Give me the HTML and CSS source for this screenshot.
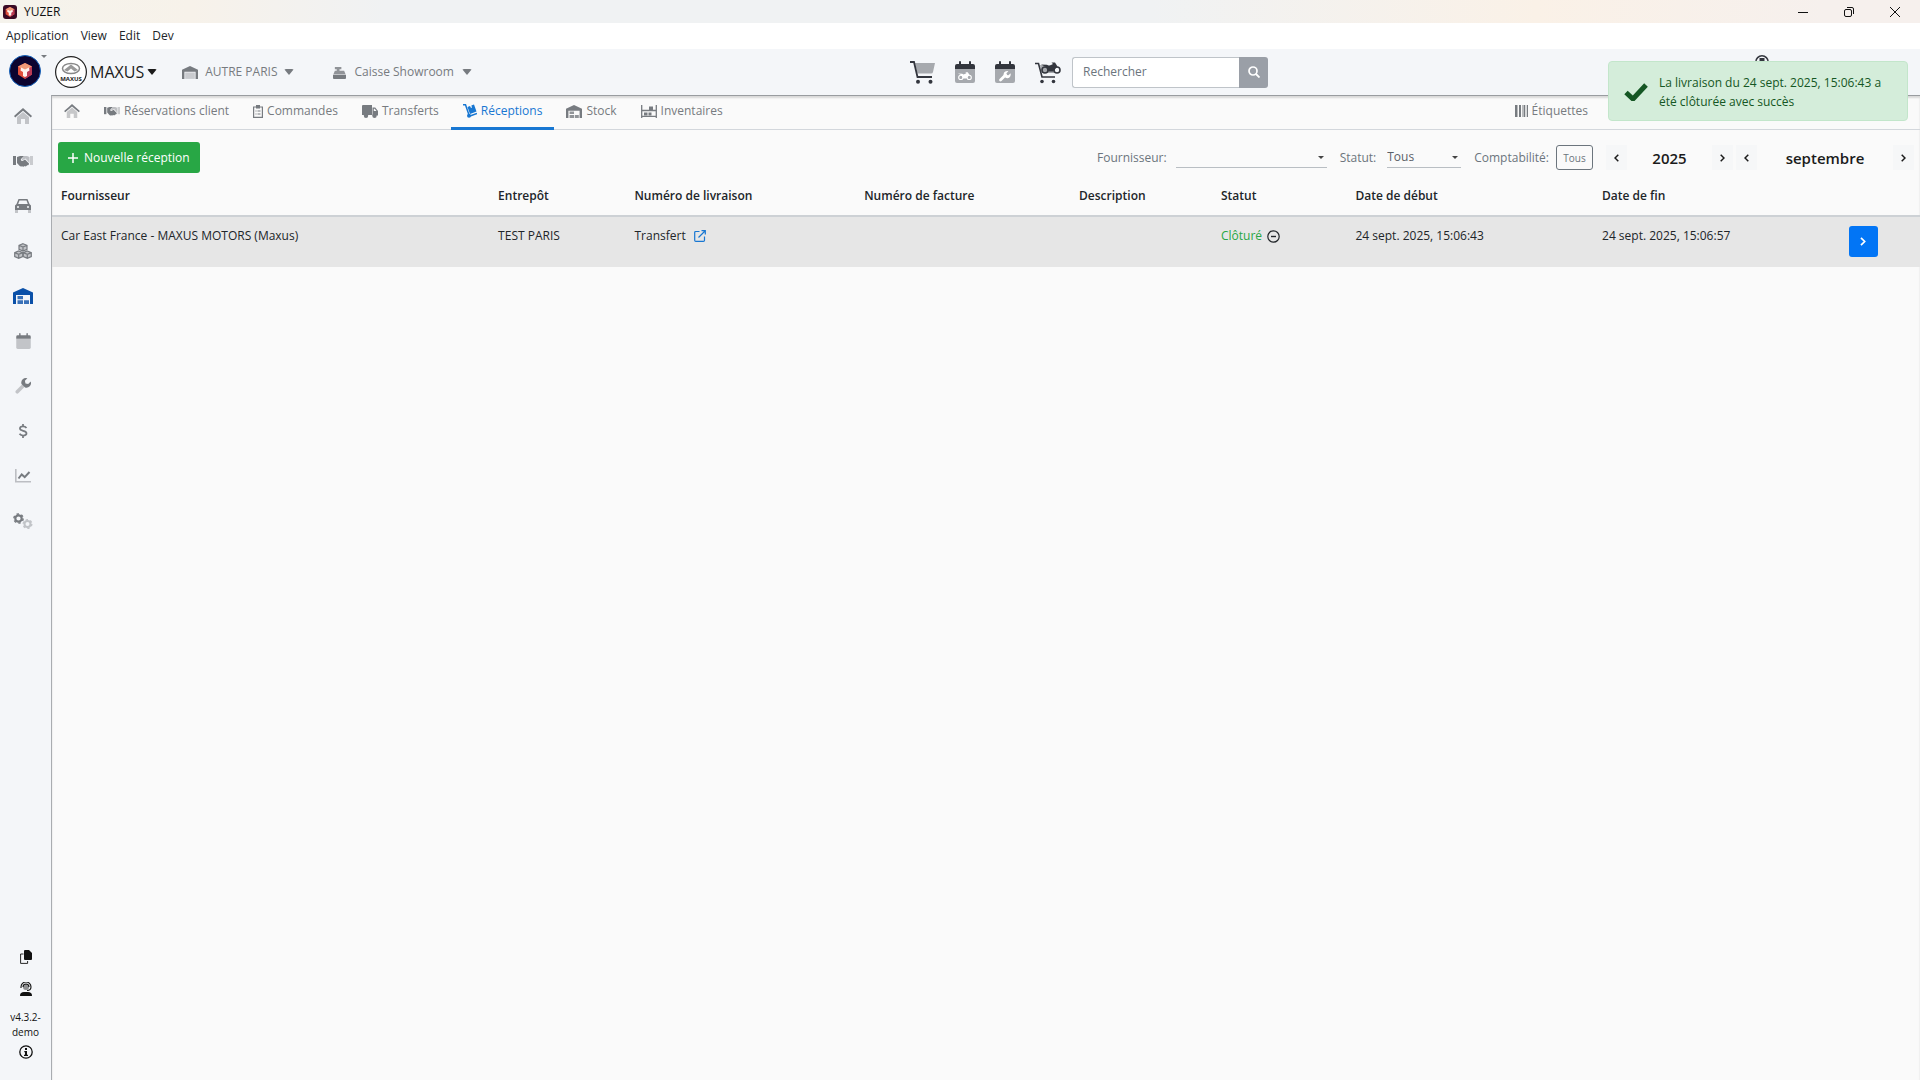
FILE: index.html
```html
<!DOCTYPE html>
<html lang="fr">
<head>
<meta charset="utf-8">
<title>YUZER</title>
<link rel="stylesheet" href="styles.css">
</head>
<body>
<svg class="sprite" aria-hidden="true">
  <symbol id="home" viewBox="0 0 18 16"><path d="M3 9l6-5 6 5v7h-4v-5H7v5H3z" opacity=".4"/><path d="M9 0l9 8-1.200 1.500L9 2.800 1.200 9.500 0 8l5-4.400z"/></symbol>
  <symbol id="shake" viewBox="0 0 20 12"><path d="M0 1h3v9H0z"/><path d="M17 1h3v9h-3z" opacity=".35"/><path d="M4 2l3-1h4L8 4c-.6 1.500 1 2.600 2.400 1.500L12 4.500l4 4c0 1.500-1 2-2 1.800-.3 1-1.500 1.400-2.300.8-.8.800-2 .7-2.700.2-1 .5-2 .1-2.500-.6L4 8z"/><path d="M11 1h3l2.500 1v6L12.500 3.500 10 5c-1 .4-1.500-.4-1-1z" opacity=".45"/></symbol>
  <symbol id="car" viewBox="0 0 16 14"><path d="M3.500 0h9l2 5L16 6.500V11H0V6.500L1.500 5zm1 1.600L3.200 5h9.600l-1.300-3.400zM3 7a1 1 0 100 2 1 1 0 000-2zm10 0a1 1 0 100 2 1 1 0 000-2z" fill-rule="evenodd"/><path d="M0 11h3v3H0zm13 0h3v3h-3z" opacity=".4"/></symbol>
  <symbol id="boxes" viewBox="0 0 18 16"><path d="M9 .7l4 1.600v4L9 8 5 6.300v-4zM4.700 8l4 1.600v4l-4 1.700-4-1.700v-4zM13.300 8l4 1.600v4l-4 1.700-4-1.700v-4z" opacity=".4"/><path d="M9 .7l4 1.600v4L9 8 5 6.300v-4zM5 2.300L9 4l4-1.700M9 4v4M4.700 8l4 1.600v4l-4 1.700-4-1.700v-4zM.7 9.600l4 1.700 4-1.700M4.700 11.300v4M13.300 8l4 1.600v4l-4 1.700-4-1.700v-4zM9.300 9.600l4 1.700 4-1.700M13.300 11.300v4" fill="none" stroke="currentColor" stroke-width="1.200"/></symbol>
  <symbol id="depot" viewBox="0 0 20 16"><path d="M0 16V4.500L10 0l10 4.500V16h-3V7H3v9z"/><path d="M4.500 8H10v3.200H4.500zM4.500 12.300H10V16H4.500zM11 12.300h5V16h-5z" opacity=".8"/></symbol>
  <symbol id="depotlight" viewBox="0 0 20 16"><path d="M0 16V4.500L10 0l10 4.500V16h-3V7H3v9z"/><path d="M4 8h12v8H4z" opacity=".35"/></symbol>
  <symbol id="cal" viewBox="0 0 20 22"><path d="M0 8h20v12q0 2-2 2H2q-2 0-2-2z" opacity=".4"/><path d="M0 8V5q0-2 2-2h2V1q0-1 1-1t1 1v2h8V1q0-1 1-1t1 1v2h2q2 0 2 2v3z"/></symbol>
  <symbol id="wrench" viewBox="0 0 16 16"><path d="M7.500 6L1 12.500a1.700 1.700 0 002.500 2.500L10 8.500z" opacity=".4"/><path d="M15.700 3.600l-2.500 2.500-2.700-.6-.6-2.700L12.400.3A4.600 4.600 0 006.500 6l3.600 3.600a4.600 4.600 0 005.600-6z"/></symbol>
  <symbol id="dollar" viewBox="0 0 10 16"><path d="M9 4.600C8 3.200 6.500 2.800 5 2.800c-2 0-3.500.9-3.500 2.400C1.500 8.700 9 7 9 10.600c0 1.700-1.700 2.600-3.800 2.600C3.500 13.200 2 12.600 1 11.200M5 0v3M5 13v3" fill="none" stroke="currentColor" stroke-width="2"/></symbol>
  <symbol id="chart" viewBox="0 0 16 14"><path d="M.8 0v12.800H16" fill="none" stroke="currentColor" stroke-width="1.600" opacity=".45"/><path d="M3.500 9.500l3.200-4 3 2.600L14.500 3" fill="none" stroke="currentColor" stroke-width="2"/></symbol>
  <symbol id="gears" viewBox="0 0 20 16"><circle cx="5.500" cy="5.500" r="3.200" fill="none" stroke="currentColor" stroke-width="2.200"/><circle cx="5.500" cy="5.500" r="4.600" fill="none" stroke="currentColor" stroke-width="1.500" stroke-dasharray="2.400 2.400"/><g opacity=".4"><circle cx="14.500" cy="11" r="3" fill="none" stroke="currentColor" stroke-width="2"/><circle cx="14.500" cy="11" r="4.300" fill="none" stroke="currentColor" stroke-width="1.400" stroke-dasharray="2.250 2.250"/></g></symbol>
  <symbol id="copy" viewBox="0 0 12 14"><path d="M3.500 4H.6v9.400h7V11" fill="none" stroke="currentColor" stroke-width=".9"/><path d="M5 0h4l3 3v6q0 1-1 1H5q-1 0-1-1V1q0-1 1-1z"/></symbol>
  <symbol id="agent" viewBox="0 0 12 14"><circle cx="6" cy="5" r="3" opacity=".45"/><path d="M1 6V5a5 5 0 0110 0c0 2-1.500 3.500-4 3.500M3 5a3 3 0 016 0" fill="none" stroke="currentColor" stroke-width="1.100"/><path d="M0 14c0-3 1.500-4 4-4h4c2.500 0 4 1 4 4z"/></symbol>
  <symbol id="info" viewBox="0 0 14 14"><circle cx="7" cy="7" r="6.200" fill="none" stroke="currentColor" stroke-width="1.300"/><path d="M6 3h2v2H6zM5.300 6H8v3.700h1V11H5V9.700h1V7.200h-.7z"/></symbol>
  <symbol id="register" viewBox="0 0 14 14"><path d="M2 1h7v2.500H7V5h5l1.500 4H.5L2 5h2V3.500H2z" opacity=".8"/><path d="M0 9.500h14V13q0 1-1 1H1q-1 0-1-1z"/></symbol>
  <symbol id="clip" viewBox="0 0 10 13"><path d="M.6 2h8.800v10.400H.6z" fill="none" stroke="currentColor" stroke-width="1.200"/><path d="M3 0h4v3.500H3zM2.500 5.500h1v1h-1zM4.500 5.500h3v1h-3zM2.500 8.500h1v1h-1zM4.500 8.500h3v1h-3z"/></symbol>
  <symbol id="truck" viewBox="0 0 16 13"><path d="M1 0h9v10H0V1q0-1 1-1z"/><path d="M10.500 2.500h2.700L16 6v4.500h-5.500zm1.300 1.200V6h2.700l-1.800-2.300z" fill-rule="evenodd"/><circle cx="4" cy="10.700" r="2.200"/><circle cx="12.500" cy="10.700" r="2.200"/></symbol>
  <symbol id="dolly" viewBox="0 0 14 14"><path d="M0 .8h2.500L6 11M7 12l7-2.500" fill="none" stroke="currentColor" stroke-width="1.500"/><circle cx="6" cy="11.800" r="2"/><path d="M4.500 3L7 2l1 2 1-.4-.7-2L11 .6l2.500 7L7 10z"/></symbol>
  <symbol id="shelf" viewBox="0 0 16 13"><path d="M.7 0v13M15.300 0v13M.7 5.500h14.600M.7 11.300h14.600" fill="none" stroke="currentColor" stroke-width="1.300"/><path d="M8 1.500h4V5H8zM3 7.500h3.500v3H3zM7.500 7.500h3v3h-3z"/></symbol>
  <symbol id="bars" viewBox="0 0 13 12"><path d="M0 0h2v12H0zM4 0h2v12H4zM9 0h1v12H9zM12 0h1v12h-1z"/><path d="M2 0h1v12H2zM7 0h2v12H7zM10.500 0h1v12h-1z" opacity=".5"/></symbol>
  <symbol id="cart" viewBox="0 0 25 23"><path d="M5 2h20l-2 9q-.3 1.500-2 1.500H7.500z" opacity=".4"/><path d="M0 1h4l3.500 15H22" fill="none" stroke="currentColor" stroke-width="1.800"/><circle cx="8" cy="20.800" r="2"/><circle cx="20.500" cy="20.800" r="2"/></symbol>
  <symbol id="moto" viewBox="0 0 20 12"><circle cx="4" cy="8" r="3" fill="none" stroke="currentColor" stroke-width="1.600"/><circle cx="16" cy="8" r="3" fill="none" stroke="currentColor" stroke-width="1.600"/><path d="M0 2.500l6 .2L8 4l4-2-1.500-1.500H14l2.500 4-2 2-2.500 3H7.500L5 5z"/></symbol>
  <symbol id="motocart" viewBox="0 0 26 23"><path d="M5 4h16l-2 8H7z" opacity=".4"/><path d="M0 2.500h3.500L7 16h13" fill="none" stroke="currentColor" stroke-width="1.600"/><circle cx="7" cy="20.500" r="1.800"/><circle cx="18.500" cy="20.500" r="1.800"/><use href="#moto" x="6" y="1" width="20" height="12"/></symbol>
  <symbol id="calmoto" viewBox="0 0 20 22"><use href="#cal"/><g color="#fff" fill="#fff"><use href="#moto" x="3" y="10.500" width="14" height="9"/></g></symbol>
  <symbol id="calwrench" viewBox="0 0 20 22"><use href="#cal"/><path d="M5.500 19l5-5" stroke="#fff" stroke-width="2.800" stroke-linecap="round"/><path d="M15.500 12.300l-2 2-1.700-.4-.4-1.700 2-2a3.600 3.600 0 102.100 2.100z" fill="#fff"/></symbol>
  <symbol id="search" viewBox="0 0 12 12"><circle cx="5" cy="5" r="4" fill="none" stroke="currentColor" stroke-width="1.700"/><path d="M8 8l3.500 3.500" stroke="currentColor" stroke-width="1.800"/></symbol>
  <symbol id="plus" viewBox="0 0 10 10"><path d="M5 0v10M0 5h10" stroke="currentColor" stroke-width="1.500"/></symbol>
  <symbol id="left" viewBox="0 0 5 8"><path d="M4.300.7L1 4l3.300 3.300" fill="none" stroke="currentColor" stroke-width="1.500"/></symbol>
  <symbol id="right" viewBox="0 0 5 8"><path d="M.7.700L4 4 .7 7.300" fill="none" stroke="currentColor" stroke-width="1.500"/></symbol>
  <symbol id="external" viewBox="0 0 12 12"><path d="M5.500 1.500H1.800q-1.100 0-1.100 1.100v7.600q0 1.100 1.100 1.100h7.600q1.100 0 1.100-1.100V6.500M4.500 7.500L11 1M7.500.7h3.800v3.800" fill="none" stroke="currentColor" stroke-width="1.200"/></symbol>
  <symbol id="minus" viewBox="0 0 13 13"><circle cx="6.500" cy="6.500" r="5.700" fill="none" stroke="currentColor" stroke-width="1.200"/><path d="M4 6.500h5" stroke="currentColor" stroke-width="1.400"/></symbol>
  <symbol id="check" viewBox="0 0 24 18"><path d="M2 9.500l7 6.500L22 2" fill="none" stroke="currentColor" stroke-width="5"/></symbol>
  <symbol id="user" viewBox="0 0 14 14"><circle cx="7" cy="7" r="6.200" fill="none" stroke="currentColor" stroke-width="1.500"/><path d="M4.500 3h5v4h-5z"/></symbol>
  <symbol id="gem" viewBox="0 0 16 16"><path d="M8 0l7 3.500v8L8 16l-7-4.500v-8z" fill="#e0503c"/><path d="M8 0l7 3.500L8 8 1 3.500z" fill="#f09a78"/><path d="M8 8l7-4.500v8L8 16z" fill="#b93a55"/><path d="M4 4.500L8 6.500l4-2 .5 3L10 9v4l-2 1-2-1V9L3.500 7.500z" fill="#fff4ef"/></symbol>
</svg>

<header class="titlebar">
  <span class="appicon"><svg width="10" height="10"><use href="#gem"/></svg></span>
  <span>YUZER</span>
  <div class="winbtns">
    <button aria-label="Réduire"><svg width="10" height="10" viewBox="0 0 10 10"><path d="M0 5.500h10" stroke="#111"/></svg></button>
    <button aria-label="Restaurer"><svg width="10" height="10" viewBox="0 0 10 10"><path d="M3 .5h5q1.500 0 1.500 1.500v5M.5 4q0-1.500 1.500-1.500h4q1.500 0 1.500 1.500v4q0 1.500-1.500 1.500H2Q.5 9.500.5 8z" fill="none" stroke="#111"/></svg></button>
    <button aria-label="Fermer"><svg width="10" height="10" viewBox="0 0 10 10"><path d="M0 0l10 10M10 0L0 10" stroke="#111"/></svg></button>
  </div>
</header>
<nav class="menubar" aria-label="Menu">
  <button>Application</button><button>View</button><button>Edit</button><button>Dev</button>
</nav>

<div class="app">
  <aside class="side">
    <button class="brand" aria-label="YUZER"><span class="disc"><svg width="16" height="16"><use href="#gem"/></svg></span><i class="caret tiny"></i></button>
    <div class="rail">
      <nav class="modules" aria-label="Modules">
        <a href="#" aria-label="Accueil"><svg width="18" height="16"><use href="#home"/></svg></a>
        <a href="#" aria-label="Clients"><svg width="20" height="12"><use href="#shake"/></svg></a>
        <a href="#" aria-label="Véhicules"><svg width="16" height="14"><use href="#car"/></svg></a>
        <a href="#" aria-label="Articles"><svg width="18" height="16"><use href="#boxes"/></svg></a>
        <a href="#" aria-label="Entrepôt" class="on"><svg width="20" height="16"><use href="#depot"/></svg></a>
        <a href="#" aria-label="Agenda"><svg width="15" height="16"><use href="#cal"/></svg></a>
        <a href="#" aria-label="Atelier"><svg width="16" height="16"><use href="#wrench"/></svg></a>
        <a href="#" aria-label="Finance"><svg width="10" height="14"><use href="#dollar"/></svg></a>
        <a href="#" aria-label="Statistiques"><svg width="16" height="14"><use href="#chart"/></svg></a>
        <a href="#" aria-label="Paramètres"><svg width="20" height="16"><use href="#gears"/></svg></a>
      </nav>
      <div class="about">
        <button aria-label="Copier"><svg width="12" height="14"><use href="#copy"/></svg></button>
        <button aria-label="Assistance"><svg width="12" height="14"><use href="#agent"/></svg></button>
        <span class="version">v4.3.2-<br>demo</span>
        <button aria-label="Informations"><svg width="14" height="14"><use href="#info"/></svg></button>
      </div>
    </div>
  </aside>

  <div class="main">
    <header class="top">
      <div class="context">
        <button class="company">
          <svg width="32" height="32" viewBox="0 0 32 32"><circle cx="16" cy="16" r="15.400" fill="#fff" stroke="#222" stroke-width="1.200"/><ellipse cx="16" cy="12.500" rx="8.500" ry="5" fill="none" stroke="#888" stroke-width="1.500"/><path d="M9 14l7-5.500 7 5.500-3.500 1.500L16 12.500l-3.500 3z" fill="#999"/><text x="16" y="25" text-anchor="middle" font-size="6" font-weight="700" fill="#222">MAXUS</text></svg>
          <span>MAXUS</span><i class="caret"></i></button>
        <button class="site"><svg width="16" height="13"><use href="#depotlight"/></svg><span>AUTRE PARIS</span><i class="caret"></i></button>
        <button class="till"><svg width="13" height="13"><use href="#register"/></svg><span>Caisse Showroom</span><i class="caret"></i></button>
      </div>
      <div class="tools">
        <button aria-label="Panier"><svg width="25" height="23"><use href="#cart"/></svg></button>
        <button aria-label="Essais"><svg width="20" height="22"><use href="#calmoto"/></svg></button>
        <button aria-label="Rendez-vous atelier"><svg width="20" height="22"><use href="#calwrench"/></svg></button>
        <button aria-label="Vente moto"><svg width="26" height="23"><use href="#motocart"/></svg></button>
      </div>
      <form class="search" role="search">
        <input type="search" placeholder="Rechercher" aria-label="Rechercher">
        <button type="button" aria-label="Lancer la recherche"><svg width="12" height="12"><use href="#search"/></svg></button>
      </form>
      <button class="account" aria-label="Compte"><svg width="14" height="14"><use href="#user"/></svg></button>
    </header>

    <div class="page">
      <nav class="tabs" aria-label="Entrepôt">
        <a href="#" aria-label="Accueil entrepôt"><svg width="16" height="14"><use href="#home"/></svg></a>
        <a href="#"><svg width="16" height="10"><use href="#shake"/></svg>Réservations client</a>
        <a href="#"><svg width="10" height="13"><use href="#clip"/></svg>Commandes</a>
        <a href="#"><svg width="16" height="13"><use href="#truck"/></svg>Transferts</a>
        <a href="#" class="on" aria-current="page"><svg width="14" height="14"><use href="#dolly"/></svg>Réceptions</a>
        <a href="#"><svg width="16" height="13"><use href="#depot"/></svg>Stock</a>
        <a href="#"><svg width="16" height="13"><use href="#shelf"/></svg>Inventaires</a>
        <a href="#" class="labels"><svg width="13" height="12"><use href="#bars"/></svg>Étiquettes</a>
      </nav>

      <div class="toolbar">
        <button class="new"><svg width="10" height="10"><use href="#plus"/></svg>Nouvelle réception</button>
        <div class="filters">
          <label for="supplier">Fournisseur:</label>
          <span class="pick wide"><select id="supplier"><option></option></select><i class="caret tiny"></i></span>
          <label for="state">Statut:</label>
          <span class="pick"><select id="state"><option>Tous</option></select><i class="caret tiny"></i></span>
          <label for="accounting">Comptabilité:</label>
          <button class="all" id="accounting">Tous</button>
        </div>
        <div class="stepper year">
          <button aria-label="Année précédente"><svg width="5" height="8"><use href="#left"/></svg></button><span>2025</span><button aria-label="Année suivante"><svg width="5" height="8"><use href="#right"/></svg></button>
        </div>
        <div class="stepper month">
          <button aria-label="Mois précédent"><svg width="5" height="8"><use href="#left"/></svg></button><span>septembre</span><button aria-label="Mois suivant"><svg width="5" height="8"><use href="#right"/></svg></button>
        </div>
      </div>

      <table class="list">
        <colgroup><col class="c-supplier"><col class="c-depot"><col class="c-delivery"><col class="c-invoice"><col class="c-desc"><col class="c-state"><col class="c-date"><col class="c-date"><col></colgroup>
        <thead><tr><th>Fournisseur</th><th>Entrepôt</th><th>Numéro de livraison</th><th>Numéro de facture</th><th>Description</th><th>Statut</th><th>Date de début</th><th>Date de fin</th><th></th></tr></thead>
        <tbody><tr>
          <td>Car East France - MAXUS MOTORS (Maxus)</td>
          <td>TEST PARIS</td>
          <td><span class="pair wider">Transfert <a href="#" aria-label="Ouvrir le transfert"><svg width="12" height="12"><use href="#external"/></svg></a></span></td>
          <td></td><td></td>
          <td><span class="pair"><span class="closed">Clôturé</span><svg width="13" height="13"><use href="#minus"/></svg></span></td>
          <td>24 sept. 2025, 15:06:43</td>
          <td>24 sept. 2025, 15:06:57</td>
          <td><button class="open" aria-label="Ouvrir"><svg width="6" height="9"><use href="#right"/></svg></button></td>
        </tr></tbody>
      </table>
    </div>
  </div>
</div>

<div class="toast" role="status">
  <svg width="24" height="18"><use href="#check"/></svg>
  <p>La livraison du 24 sept. 2025, 15:06:43 a été clôturée avec succès</p>
</div>
</body>
</html>
```
FILE: styles.css
```css
* { box-sizing: border-box; }

body {
  margin: 0;
  min-height: 100vh;
  display: flex;
  flex-direction: column;
  font: 12px/20px "Open Sans", "Noto Sans", sans-serif;
  color: #212529;
  background: #fafafa;
}

svg { fill: currentColor; flex: none; display: block; }
.sprite { position: absolute; width: 0; height: 0; }
button { font: inherit; color: inherit; background: none; border: 0; padding: 0; }
a { color: inherit; text-decoration: none; }

.caret {
  border: 5px solid transparent;
  border-top: 6px solid currentColor;
  border-bottom: 0;
  border-radius: 2px;
}
.caret.tiny { border-width: 3px 3px 0; border-radius: 0; }

.titlebar {
  display: flex;
  align-items: center;
  gap: 7px;
  height: 23px;
  padding-left: 3px;
  color: #111;
  background: linear-gradient(90deg, #f5f3ec, #f7f2ea 10%, #f0f2f3 20%, #f0f2f3 60%, #faf1e7 80%, #f6f0ed 95%);
}
.appicon {
  display: grid;
  place-items: center;
  width: 14px;
  height: 14px;
  border-radius: 3px;
  background: #3a0a24;
}
.winbtns { display: flex; margin-left: auto; }
.winbtns button { width: 46px; height: 20px; display: grid; place-items: center; }
.winbtns button:last-child { margin-right: 2px; }

.menubar {
  display: flex;
  align-items: center;
  gap: 12px;
  height: 26px;
  padding-left: 6px;
  background: #fff;
}

.app { flex: 1; display: flex; background: #f4f6f9; }
.side { width: 51px; display: flex; flex-direction: column; color: #777b80; }
.brand { display: flex; align-items: flex-start; height: 44px; padding: 6px 0 0 9px; }
.disc {
  display: grid;
  place-items: center;
  width: 32px;
  height: 32px;
  border-radius: 50%;
  border: 1px solid #1565c0;
  background: #0c0430;
}
.rail { flex: 1; display: flex; flex-direction: column; justify-content: space-between; }
.modules { display: flex; flex-direction: column; width: 46px; }
.modules a { display: grid; place-items: center; height: 45px; }
.modules .on { color: #0a50a8; }
.about {
  display: flex;
  flex-direction: column;
  align-items: center;
  gap: 9px;
  padding-bottom: 21px;
  color: #111;
}
.about button:nth-child(2) { padding-top: 9px; }
.version { font-size: 10px; line-height: 15px; padding-top: 5px; text-align: center; }
.version + button { margin-top: -4px; }

.main { flex: 1; min-width: 0; display: flex; flex-direction: column; }
.top {
  display: flex;
  align-items: center;
  height: 46px;
  padding-left: 4px;
}
.context { display: flex; align-items: center; width: 855px; color: #777b80; }
.context button { display: flex; align-items: center; }
.company { gap: 3px; font-size: 16px; color: #1b1b1b; }
.site { gap: 7px; padding-left: 25px; }
.till { gap: 8px; padding-left: 39px; }
.tools { display: flex; align-items: center; gap: 20px; color: #33363e; }
.search { display: flex; height: 31px; margin-left: 11px; }
.search input {
  width: 167px;
  border: 1px solid #bfc4c9;
  border-right: 0;
  border-radius: 3px 0 0 3px;
  padding: 0 10px;
  font: inherit;
  background: #fff;
  appearance: none;
}
.search input::placeholder { color: #6c757d; opacity: 1; }
.search button {
  display: grid;
  place-items: center;
  width: 29px;
  color: #fff;
  background: #9a9fa7;
  border-radius: 0 3px 3px 0;
}
.account { align-self: flex-start; margin: 6px 151px 0 auto; color: #33363e; }

.page {
  flex: 1;
  background: #fafafa;
  border-top: 1px solid #999ca0;
  border-left: 1px solid #a9acb0;
  box-shadow: inset 0 2px 2px #0002;
}
.tabs {
  display: flex;
  height: 34px;
  border-bottom: 1px solid #d3d7dc;
  color: #777b80;
}
.tabs a {
  display: flex;
  align-items: center;
  gap: 4px;
  height: 34px;
  padding: 0 12px 1px;
  border-bottom: 3px solid transparent;
}
.tabs .on { color: #1877d2; border-color: #1877d2; }
.tabs .labels { margin-left: auto; margin-right: 320px; }

.toolbar { display: flex; align-items: center; height: 55px; padding: 0 6px; color: #6c757d; }
.new {
  display: flex;
  align-items: center;
  gap: 6px;
  height: 31px;
  padding: 0 10px;
  color: #fff;
  background: #28a745;
  border-radius: 3px;
}
.filters { display: flex; align-items: center; gap: 7px; margin-left: auto; }
.pick { display: grid; align-items: center; width: 74px; margin: 0 6px 0 4px; border-bottom: 1px solid #b9bec3; }
.pick.wide { width: 151px; margin-left: 2px; }
.pick select, .pick .caret { grid-area: 1 / 1; }
.pick select { appearance: none; border: 0; background: none; font: inherit; color: #5a6067; height: 20px; width: 100%; padding: 0; }
.pick .caret { justify-self: end; margin-right: 3px; color: #444; pointer-events: none; }
.all { width: 37px; height: 25px; font-size: 10px; border: 1px solid #6c757d; border-radius: 3px; }
.stepper { display: flex; align-items: center; justify-content: space-between; color: #1b1b1b; font-weight: 600; font-size: 15px; }
.stepper button { display: grid; place-items: center; width: 21px; height: 25px; background: #f6f7f8; }
.year { width: 127px; margin-left: 13px; }
.month { width: 178px; margin-left: 3px; }

.list { width: 100%; border-collapse: collapse; table-layout: fixed; }
.c-supplier { width: 23.4%; }
.c-depot { width: 7.3%; }
.c-delivery { width: 12.3%; }
.c-invoice { width: 11.5%; }
.c-desc { width: 7.6%; }
.c-state { width: 7.2%; }
.c-date { width: 13.2%; }
.list th { height: 31px; padding: 0 9px 8px; text-align: left; font-weight: 600; border-bottom: 2px solid #cdd1d5; }
.list td { height: 51px; padding: 9px; vertical-align: top; background: #e6e6e6; }
.pair { display: flex; align-items: center; gap: 5px; }
.pair.wider { gap: 8px; }
.pair a { color: #1877d2; }
.closed { color: #28a745; }
.open {
  display: grid;
  place-items: center;
  width: 29px;
  height: 31px;
  color: #fff;
  background: #0275f5;
  border-radius: 3px;
}

.toast {
  position: fixed;
  top: 61px;
  right: 12px;
  width: 300px;
  height: 60px;
  display: flex;
  align-items: center;
  gap: 11px;
  padding: 1px 15px 0;
  color: #155724;
  background: #d4edda;
  border: 1px solid #c3e6cb;
  border-radius: 4px;
}
.toast p { margin: 0; line-height: 19px; }
```
